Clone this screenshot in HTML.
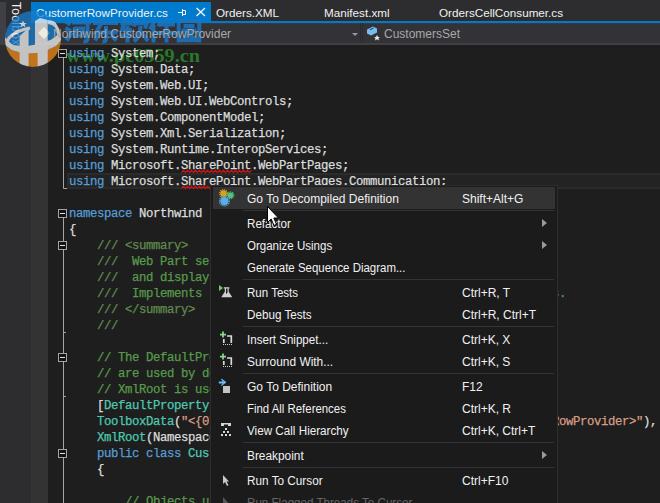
<!DOCTYPE html>
<html><head><meta charset="utf-8">
<style>
*{margin:0;padding:0;box-sizing:border-box}
html,body{width:660px;height:503px;overflow:hidden;background:#2d2d30;position:relative;font-family:"Liberation Sans",sans-serif}
.abs{position:absolute}
#lstrip{left:0;top:2px;width:6px;height:43px;background:#3f3f46}
#toolbox{left:9px;top:2px;width:14px;height:46px;color:#f1f1f1;font-size:12px;}
#toolbox span{position:absolute;left:0;top:0;letter-spacing:0.3px;transform-origin:0 0;transform:translate(14px,0) rotate(90deg);white-space:nowrap;line-height:14px}
#tabs{left:31px;top:0;width:629px;height:23px}
.tab{position:absolute;top:2px;height:19px;font-size:11.7px;color:#f1f1f1;line-height:19px;white-space:nowrap;padding-top:1px}
#tabline{left:31px;top:21px;width:629px;height:2px;background:#007acc}
#nav{left:31px;top:23px;width:629px;height:22px;background:#333337;border-top:1px solid #3a3a3c;border-bottom:2px solid #3f3f46}
#dd1{left:31px;top:23px;width:330px;height:20px;border-right:1px solid #2b2b2e}
#dd2{left:362px;top:23px;width:298px;height:20px;border-left:1px solid #2b2b2e}
.navtxt{position:absolute;z-index:5;top:25px;font-size:12px;line-height:18px;color:#a8a8a8;white-space:nowrap}
#editor{left:31px;top:45px;width:629px;height:458px;background:#1e1e1e}
#glyph{left:31px;top:45px;width:17px;height:458px;background:#333333}
#curline{left:67px;top:173px;width:600px;height:16px;background:#232323;border:2px solid #2b2b2b;border-right:none}
.code{position:absolute;left:69px;font-family:"Liberation Mono",monospace;font-size:12.3px;letter-spacing:-0.38px;line-height:16px;height:16px;white-space:pre;color:#dcdcdc;padding-top:1px;-webkit-text-stroke:0.25px currentColor}
.k{color:#569cd6}.t{color:#4ec9b0}.c{color:#589a4b}.x{color:#608b4e}.s{color:#d69d85}
#menu{left:210px;top:185px;width:348px;height:330px;background:#1b1b1c;border:1px solid #2d2d30}
.mi{position:absolute;left:2px;width:342px;height:22px;font-size:12px;color:#f1f1f1;line-height:22px;white-space:nowrap}
.mi .l{position:absolute;left:34px;top:1px;transform-origin:0 0}
.mi .r{position:absolute;left:249px;top:1px}
.sep{position:absolute;left:32px;width:311px;height:1px;background:#333337}
.arr{position:absolute;left:329px;top:7px;width:0;height:0;border-top:4px solid transparent;border-bottom:4px solid transparent;border-left:5px solid #999999}
svg{position:absolute;overflow:visible}
</style></head><body>
<div id="lstrip" class="abs"></div>
<div id="toolbox" class="abs"><span>Toolbox</span></div>
<div id="tabs" class="abs">
  <div class="tab" style="left:0;width:180px;background:#007acc;padding-left:5px">CustomerRowProvider.cs</div>
  <div class="tab" style="left:185px">Orders.XML</div>
  <div class="tab" style="left:293px">Manifest.xml</div>
  <div class="tab" style="left:408px">OrdersCellConsumer.cs</div>
</div>
<svg style="left:0;top:0" width="660" height="23">
  <path d="M178 12.5H182M182.5 9V16M182.5 10.5H185.5V14.5H182.5" stroke="#f1f1f1" stroke-width="1" fill="none"/>
  <path d="M196.5 8L205 16M205 8L196.5 16" stroke="#f1f1f1" stroke-width="1.4" fill="none"/>
</svg>
<div id="tabline" class="abs"></div>
<div id="nav" class="abs"></div>
<div id="dd1" class="abs"></div>
<div id="dd2" class="abs"></div>
<div class="navtxt" style="left:53px">Northwind.CustomerRowProvider</div>
<div class="navtxt" style="left:384px">CustomersSet</div>
<svg style="left:0;top:0" width="660" height="45">
  <!-- class icon -->
  <path d="M38 33L44 27L50 33L44 39Z" fill="#f5e0b0" opacity="0.9"/>
  <!-- dropdown arrow -->
  <path d="M352 33H358L355 36Z" fill="#999"/>
  <!-- property icon -->
  <path d="M367 29.5L373 26.5L377 28.5V32.5L371 35.5L367 33.5Z" fill="#75bdf0"/>
  <path d="M370 29.8L373.5 28" stroke="#2a4a66" stroke-width="1.2"/>
  <path d="M377 35L378 37H380L378.5 38.3L379 40.5L377 39.2L375 40.5L375.5 38.3L374 37H376Z" fill="#e8e8e8"/>
</svg>
<div id="editor" class="abs"></div>
<div id="glyph" class="abs"></div>
<div id="curline" class="abs"></div>

<svg style="left:0;top:0" width="660" height="503">
  <g fill="none" stroke="#a5a5a5" stroke-width="1">
    <path d="M63.5 58V188.5H67"/>
    <path d="M63.5 218V503"/>
    <path d="M63.5 332.5H66"/>
    <path d="M63.5 396.5H66"/>
    <rect x="58.5" y="49.5" width="8" height="8" fill="#141414"/>
    <rect x="58.5" y="209.5" width="8" height="8" fill="#141414"/>
    <rect x="58.5" y="241.5" width="8" height="8" fill="#141414"/>
    <rect x="58.5" y="353.5" width="8" height="8" fill="#141414"/>
    <rect x="58.5" y="449.5" width="8" height="8" fill="#141414"/>
    <path d="M60 53.5H65M60 213.5H65M60 245.5H65M60 357.5H65M60 453.5H65" stroke="#e0e0e0"/>
  </g>
</svg>

<svg style="left:0;top:0" width="660" height="80">
  <text x="66" y="62" textLength="134" lengthAdjust="spacingAndGlyphs" font-family="Liberation Serif" font-weight="bold" font-size="18.5" fill="#2a8a2a" fill-opacity="0.85">www.pc0359.cn</text>
</svg>
<div class="code" style="top:45px"><span class="k">using</span> System;</div>
<div class="code" style="top:61px"><span class="k">using</span> System.Data;</div>
<div class="code" style="top:77px"><span class="k">using</span> System.Web.UI;</div>
<div class="code" style="top:93px"><span class="k">using</span> System.Web.UI.WebControls;</div>
<div class="code" style="top:109px"><span class="k">using</span> System.ComponentModel;</div>
<div class="code" style="top:125px"><span class="k">using</span> System.Xml.Serialization;</div>
<div class="code" style="top:141px"><span class="k">using</span> System.Runtime.InteropServices;</div>
<div class="code" style="top:157px"><span class="k">using</span> Microsoft.SharePoint.WebPartPages;</div>
<div class="code" style="top:173px"><span class="k">using</span> Microsoft.SharePoint.WebPartPages.Communication;</div>
<div class="code" style="top:205px"><span class="k">namespace</span> Northwind</div>
<div class="code" style="top:221px">{</div>
<div class="code" style="top:237px">    <span class="x">/// &lt;summary&gt;</span></div>
<div class="code" style="top:253px">    <span class="x">///</span><span class="c">  Web Part serves as a data provider</span></div>
<div class="code" style="top:269px">    <span class="x">///</span><span class="c">  and displays customer rows</span></div>
<div class="code" style="top:285px">    <span class="x">///</span><span class="c">  Implements the IRowProvider interface for WebPart connections.</span></div>
<div class="code" style="top:301px">    <span class="x">/// &lt;/summary&gt;</span></div>
<div class="code" style="top:317px">    <span class="x">///</span></div>
<div class="code" style="top:349px">    <span class="c">// The DefaultProperty attribute</span></div>
<div class="code" style="top:365px">    <span class="c">// are used by designer</span></div>
<div class="code" style="top:381px">    <span class="c">// XmlRoot is used for</span></div>
<div class="code" style="top:397px">    [<span class="t">DefaultProperty</span>(<span class="s">"Text"</span>),</div>
<div class="code" style="top:413px">    <span class="t">ToolboxData</span>(<span class="s">"&lt;{0}:CustomerRowProvider runat=server&gt;&lt;/{0}:CustomerRowProvider&gt;"</span>),</div>
<div class="code" style="top:429px">    <span class="t">XmlRoot</span>(Namespace=<span class="s">"Northwind"</span>)]</div>
<div class="code" style="top:445px">    <span class="k">public</span> <span class="k">class</span> <span class="t">CustomerRowProvider</span></div>
<div class="code" style="top:461px">    {</div>
<div class="code" style="top:493px">        <span class="c">// Objects used</span></div>

<svg style="left:0;top:0" width="660" height="503">
  <path d="M181.5 172.60 L183.5 170.20 L185.5 172.60 L187.5 170.20 L189.5 172.60 L191.5 170.20 L193.5 172.60 L195.5 170.20 L197.5 172.60 L199.5 170.20 L201.5 172.60 L203.5 170.20 L205.5 172.60 L207.5 170.20 L209.5 172.60 L211.5 170.20 L213.5 172.60 L215.5 170.20 L217.5 172.60 L219.5 170.20 L221.5 172.60 L223.5 170.20 L225.5 172.60 L227.5 170.20 L229.5 172.60 L231.5 170.20 L233.5 172.60 L235.5 170.20 L237.5 172.60 L239.5 170.20 L241.5 172.60 L243.5 170.20 L245.5 172.60 L247.5 170.20 L249.5 172.60 L251.5 170.20" stroke="#cc1616" stroke-width="1.2" fill="none"/>
  <path d="M181.5 188.60 L183.5 186.20 L185.5 188.60 L187.5 186.20 L189.5 188.60 L191.5 186.20 L193.5 188.60 L195.5 186.20 L197.5 188.60 L199.5 186.20 L201.5 188.60 L203.5 186.20 L205.5 188.60 L207.5 186.20 L209.5 188.60 L211.5 186.20" stroke="#cc1616" stroke-width="1.2" fill="none"/>
</svg>

<div id="menu" class="abs">
  <div class="mi" style="top:1px;background:#333334"><span class="l">Go To Decompiled Definition</span><span class="r">Shift+Alt+G</span></div>
  <div class="sep" style="top:24px"></div>
  <div class="mi" style="top:26px"><span class="l" style="transform:scaleX(0.968)">Refactor</span><i class="arr"></i></div>
  <div class="mi" style="top:48px"><span class="l" style="transform:scaleX(0.96)">Organize Usings</span><i class="arr"></i></div>
  <div class="mi" style="top:70px"><span class="l" style="transform:scaleX(0.954)">Generate Sequence Diagram...</span></div>
  <div class="sep" style="top:93px"></div>
  <div class="mi" style="top:95px"><span class="l" style="transform:scaleX(0.96)">Run Tests</span><span class="r">Ctrl+R, T</span></div>
  <div class="mi" style="top:117px"><span class="l" style="transform:scaleX(0.973)">Debug Tests</span><span class="r">Ctrl+R, Ctrl+T</span></div>
  <div class="sep" style="top:140px"></div>
  <div class="mi" style="top:142px"><span class="l" style="transform:scaleX(0.965)">Insert Snippet...</span><span class="r">Ctrl+K, X</span></div>
  <div class="mi" style="top:164px"><span class="l" style="transform:scaleX(0.994)">Surround With...</span><span class="r">Ctrl+K, S</span></div>
  <div class="sep" style="top:187px"></div>
  <div class="mi" style="top:189px"><span class="l">Go To Definition</span><span class="r">F12</span></div>
  <div class="mi" style="top:211px"><span class="l" style="transform:scaleX(0.95)">Find All References</span><span class="r">Ctrl+K, R</span></div>
  <div class="mi" style="top:233px"><span class="l" style="transform:scaleX(0.973)">View Call Hierarchy</span><span class="r">Ctrl+K, Ctrl+T</span></div>
  <div class="sep" style="top:256px"></div>
  <div class="mi" style="top:258px"><span class="l" style="transform:scaleX(0.988)">Breakpoint</span><i class="arr"></i></div>
  <div class="sep" style="top:281px"></div>
  <div class="mi" style="top:283px"><span class="l" style="transform:scaleX(0.98)">Run To Cursor</span><span class="r">Ctrl+F10</span></div>
  <div class="mi" style="top:305px;color:#656565"><span class="l" style="transform:scaleX(0.967)">Run Flagged Threads To Cursor</span></div>
</div>

<!-- menu icons -->
<svg style="left:0;top:0" width="660" height="503">
  <!-- gears -->
  <g>
    <circle cx="223.5" cy="193.5" r="3.2" fill="#d7a21e"/>
    <circle cx="223.5" cy="193.5" r="3.8" fill="none" stroke="#d7a21e" stroke-width="1.2" stroke-dasharray="1.2 0.8"/>
    <circle cx="230.5" cy="195.3" r="2.8" fill="#52c57c"/>
    <circle cx="230.5" cy="195.3" r="3.4" fill="none" stroke="#52c57c" stroke-width="1.1" stroke-dasharray="1.1 0.8"/>
    <circle cx="224.4" cy="201.1" r="4.2" fill="#5aaee6"/>
    <circle cx="224.4" cy="201.1" r="4.9" fill="none" stroke="#5aaee6" stroke-width="1.2" stroke-dasharray="1.2 0.9"/>
  </g>
  <!-- run tests -->
  <path d="M219 285V291L223 288Z" fill="#6ccb6c"/>
  <path d="M223.8 287.8H229.4M225.4 288V292M228.1 288V292" fill="none" stroke="#d0d0d0" stroke-width="1.2"/>
  <path d="M224.6 292H228.9L232.2 297.2H221.3Z" fill="#d0d0d0"/>
  <path d="M225.8 292H227.6L226.7 294.2Z" fill="#1b1b1c"/>
  <!-- insert snippet / surround -->
  <g id="snip">
    <path d="M220 334.6H226M223 331.6V337.6" stroke="#86d886" stroke-width="1.8"/>
    <path d="M227 336H231.3V343M223.8 339V343" stroke="#d8d8d8" stroke-width="1.7" fill="none"/>
    <path d="M223 344.5h1M225 344.5h1M227 344.5h1M229 344.5h1M231 344.5h1" stroke="#d0d0d0" stroke-width="1"/>
  </g>
  <use href="#snip" y="22"/>
  <!-- go to definition -->
  <path d="M218.8 382.5H223.5" stroke="#6cbcf5" stroke-width="2"/>
  <path d="M221.5 379L226 382.3L221.5 385.5L223.5 382.3Z" fill="#6cbcf5" stroke="#6cbcf5" stroke-width="0.8" stroke-linejoin="round"/>
  <rect x="223" y="386" width="7" height="7" fill="#c4c4c4"/>
  <!-- call hierarchy -->
  <path d="M221 423H231V426H228V424.6H224V426H221Z" fill="#d4d4d4"/>
  <g fill="#d8d8d8"><rect x="225" y="428" width="2" height="2"/><rect x="223" y="431" width="2" height="2"/><rect x="227" y="431" width="2" height="2"/><rect x="221" y="434" width="2" height="2"/><rect x="225" y="434" width="2" height="2"/><rect x="229" y="434" width="2" height="2"/></g>
  <!-- run to cursor -->
  <path d="M223 475V484L225 482L227 486L228.5 485L226.5 481.5H229Z" fill="#c8c8c8"/>
  <path d="M223 497V506L225 504L227 508L228.5 507L226.5 503.5H229Z" fill="#555"/>
  <!-- mouse cursor -->
  <path d="M267.5 206.5V222.5L271.2 219L274 225.5L276.5 224.3L273.8 218H278.5Z" fill="#fff" stroke="#000" stroke-width="1"/>
</svg>

<!-- watermark -->
<svg style="left:0;top:0" width="660" height="503">
  <defs><clipPath id="cc"><circle cx="33" cy="39" r="28"/></clipPath></defs>
  <g clip-path="url(#cc)" opacity="0.76">
    <rect x="0" y="0" width="70" height="70" fill="#187ecc"/>
    <path d="M0 42L11.5 50L25.4 53.8L42 52.5L56 46L60.4 41L70 36V70H0Z" fill="#f08a16"/>
    <path d="M19.6 36L28.6 28V70H19.6Z" fill="#f4f4f4"/>
    <path d="M35 21L40 18L47.7 20V70H37.6V48L35 46Z" fill="#f4f4f4"/>
    <path d="M47.7 20Q62 21 60.5 36Q59 47 47.7 47ZM47.7 24Q57.5 25 57 35Q56.5 43 47.7 43Z" fill="#f4f4f4" fill-rule="evenodd"/>
    <path d="M3 35L7 39.5L12.7 45L25.4 46.3L38 44.3L51 39.8L59.8 33.4L64 29V37L60.4 41L56 46L42 52.5L25.4 53.8L11.5 50L3 43Z" fill="#f4f4f4"/>
    <path d="M30 28Q15 31 9 38Q6.5 42 6 46" fill="none" stroke="#f4f4f4" stroke-width="3.2"/>
    <path d="M23 20.5L24.1 23H26.8L24.7 24.6L25.4 27.2L23 25.8L20.6 27.2L21.3 24.6L19.2 23H21.9Z" fill="#ffffff"/>
  </g>
  <g opacity="0.85" fill="none" stroke="#1a76c6" stroke-width="4" stroke-linecap="butt" stroke-linejoin="miter">
    <path d="M65.5 21.5L70.5 24.5M65.5 28L71 31M66.5 40.5L72 32.5"/>
    <path d="M72 22.5H91M87.5 22V38.5Q87.5 42 83.5 41.5M74.8 27V37.5M74.5 28.5H83V35M74.5 35.5H83"/>
    <path d="M93 23H118M104.5 18L96 32.5H117.5M106 26V38.5Q106 42 102.5 41.5M98.5 35L95 40.5M111 35L116.5 40.5"/>
    <path d="M120.5 23.5H132M125.5 18.5L122 30H132M127.5 26V42.5M120.5 35.5H132.5"/>
    <path d="M136.5 18L133.5 26.5M135 23.5H147L145 28.5M140.5 26Q140.5 36 134 41.5M141 32L148 41"/>
    <path d="M155.5 18.5L150 29.5M153.5 25V42.5M161 19.5L158.5 26.5M159 24.5H175M157 33H176.5M166.5 18.5V42.5"/>
    <path d="M178.7 19.5V42.5M178.5 21H199.3V42.5M178.5 40.3H199.3M183.5 26H194.5M181.5 30.5H196.5M187.3 31Q187.3 36 183.5 38M191 31V35.5Q191 37.5 193.5 37.5H196"/>
  </g>
</svg>
</body></html>
